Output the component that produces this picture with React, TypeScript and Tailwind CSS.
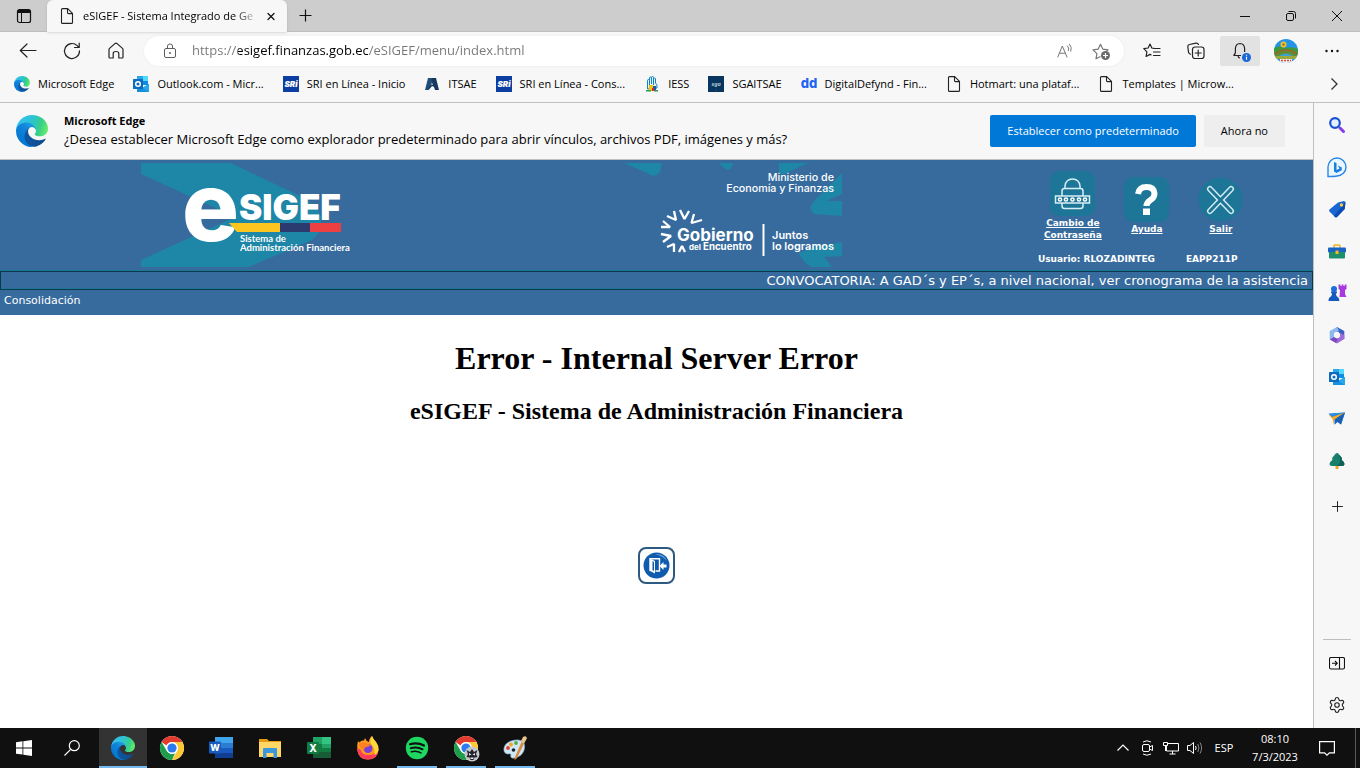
import React, { useId, useState } from 'react';
import { Plus, Search, Settings, X } from 'lucide-react';

interface IconProps {
  className?: string;
}

/* ---------- Brand icons ---------- */

const EdgeLogo: React.FC<IconProps> = ({ className }) => {
  const id = useId();
  return (
    <svg className={className} viewBox="4.6 5 256 256" aria-hidden="true">
      <defs>
        <linearGradient id={`${id}a`} x1="63" y1="178" x2="241" y2="178" gradientUnits="userSpaceOnUse">
          <stop offset="0" stopColor="#0c59a4" />
          <stop offset="1" stopColor="#114a8b" />
        </linearGradient>
        <linearGradient id={`${id}b`} x1="157" y1="100" x2="46" y2="221" gradientUnits="userSpaceOnUse">
          <stop offset="0" stopColor="#1b9de2" />
          <stop offset="0.4" stopColor="#1383d9" />
          <stop offset="1" stopColor="#0078d4" />
        </linearGradient>
        <linearGradient id={`${id}c`} x1="20" y1="60" x2="250" y2="130" gradientUnits="userSpaceOnUse">
          <stop offset="0" stopColor="#35c1f1" />
          <stop offset="0.45" stopColor="#2cc3d0" />
          <stop offset="0.75" stopColor="#36cf8a" />
          <stop offset="1" stopColor="#66eb6e" />
        </linearGradient>
      </defs>
      <path fill={`url(#${id}a)`} d="M235.68 195.46a93.73 93.73 0 0 1-10.54 4.71 101.87 101.87 0 0 1-35.9 6.46c-47.32 0-88.54-32.55-88.54-74.32A31.48 31.48 0 0 1 117.13 105c-42.8 1.8-53.8 46.4-53.8 72.53 0 73.88 68.09 81.37 82.76 81.37 7.91 0 19.84-2.3 27-4.56l1.31-.44a128.34 128.34 0 0 0 66.6-52.8 4 4 0 0 0-5.32-5.64z" />
      <path fill={`url(#${id}b)`} d="M110.34 246.34A79.2 79.2 0 0 1 87.6 225a80.72 80.72 0 0 1 29.53-120c3.12-1.47 8.45-4.13 15.54-4a32.35 32.35 0 0 1 25.69 13 31.88 31.88 0 0 1 6.36 18.66c0-.21 24.46-79.6-80-79.6-43.9 0-80 41.66-80 78.21a130.15 130.15 0 0 0 12.11 56 128 128 0 0 0 156.38 67.11 75.55 75.55 0 0 1-62.78-8z" />
      <path fill={`url(#${id}c)`} d="M156.94 153.78c-.81 1.05-3.3 2.5-3.3 5.66 0 2.61 1.7 5.12 4.72 7.23 14.38 10 41.49 8.68 41.56 8.68a59.56 59.56 0 0 0 30.27-8.35A61.38 61.38 0 0 0 260.44 114c.26-22.41-8-37.31-11.34-43.91C227.93 28.72 182.28 5 132.64 5a128 128 0 0 0-128 126.2c.48-36.54 36.8-66.05 80-66.05 3.5 0 23.46.34 42 10.07 16.34 8.58 24.9 18.94 30.85 29.21 6.18 10.67 7.28 24.15 7.28 29.52s-2.74 13.33-7.83 19.83z" />
    </svg>
  );
};

const OutlookIcon: React.FC<IconProps> = ({ className }) => (
  <svg className={className} viewBox="0 0 16 16" aria-hidden="true">
    <path fill="#28a8ea" d="M4 0h6v5H4z" />
    <path fill="#50d9ff" d="M10 0h5v5h-5z" />
    <path fill="#0364b8" d="M4 5h6v4H4z" />
    <path fill="#0f8be0" d="M10 5h5v4h-5z" />
    <path fill="#1490df" d="M4 9l6 2.5L16 8v8H4z" />
    <path fill="#28a8ea" d="M16 8v8l-7-4z" />
    <rect y="3" width="10" height="10" rx="0.6" fill="#0f6cbd" />
    <circle cx="5" cy="8" r="2.3" fill="none" stroke="#fff" strokeWidth="1.5" />
  </svg>
);

const SriIcon: React.FC<IconProps> = ({ className }) => (
  <svg className={className} viewBox="0 0 16 16" aria-hidden="true">
    <rect width="16" height="16" fill="#0b3ea0" />
    <text x="8" y="11" textAnchor="middle" fontFamily="Inter, sans-serif" fontWeight="900" fontStyle="italic" fontSize="8" fill="#fff">SRi</text>
  </svg>
);

const ItsaeIcon: React.FC<IconProps> = ({ className }) => (
  <svg className={className} viewBox="0 0 16 16" aria-hidden="true">
    <path fill="#1f4e79" d="M4 2h5L5 14H1z" />
    <path fill="#17375e" d="M8 2h4l3 12h-4l-1-3-2-1-2 2.500L4 13l3-5z" />
    <path fill="#8fb3d0" d="M8 6l1 3H7z" />
  </svg>
);

const IessIcon: React.FC<IconProps> = ({ className }) => (
  <svg className={className} viewBox="0 0 16 16" aria-hidden="true">
    <path fill="#e8f4fb" stroke="#1183c4" d="M3.500 13V4.500q0-1 1-1t1 1V2q0-1 1-1t1 1v-.500q0-1 1-1t1 1V3q0-1 1-1t1 1v4q2 1 1.500 5z" />
    <path stroke="#1183c4" d="M5.500 4v5M7.500 2v6M9.500 3v6" />
    <path fill="#f4c400" d="M5 9h4v6H5z" />
    <path fill="#1a5fb4" d="M9 10h3v4H9z" />
    <path fill="#e0252b" d="M8 12h2v3H8z" />
    <path fill="#2aa04a" d="M2 14h5v1.500H2zM10 14h4v1.500h-4z" />
  </svg>
);

const SgaIcon: React.FC<IconProps> = ({ className }) => (
  <svg className={className} viewBox="0 0 16 16" aria-hidden="true">
    <rect width="16" height="16" fill="#08365f" />
    <text x="8" y="9.500" textAnchor="middle" fontFamily="Inter, sans-serif" fontStyle="italic" fontWeight="700" fontSize="5" fill="#b9cad9">sga</text>
    <circle cx="8" cy="14" r="0.500" fill="#4b78a0" />
  </svg>
);

const DdIcon: React.FC<IconProps> = ({ className }) => (
  <svg className={className} viewBox="0 0 16 16" aria-hidden="true">
    <text x="8" y="12" textAnchor="middle" fontFamily="Inter, sans-serif" fontWeight="800" fontSize="13" fill="#1f63f2">dd</text>
  </svg>
);

const PageIcon: React.FC<IconProps> = ({ className }) => (
  <svg className={className} viewBox="0 0 16 16" fill="none" stroke="#222" strokeWidth="1.100" strokeLinejoin="round" aria-hidden="true">
    <path d="M3.500.600h5.200l4.800 4.800v9q0 1-1 1h-9q-1 0-1-1v-12.800q0-1 1-1z" />
    <path d="M8.500.600v4q0 1 1 1h4" />
  </svg>
);

/* ---------- Browser chrome ---------- */

const bookmarks = [
  { label: 'Microsoft Edge', icon: EdgeLogo },
  { label: 'Outlook.com - Micr...', icon: OutlookIcon },
  { label: 'SRI en Línea - Inicio', icon: SriIcon },
  { label: 'ITSAE', icon: ItsaeIcon },
  { label: 'SRI en Línea - Cons...', icon: SriIcon },
  { label: 'IESS', icon: IessIcon },
  { label: 'SGAITSAE', icon: SgaIcon },
  { label: 'DigitalDefynd - Fin...', icon: DdIcon },
  { label: 'Hotmart: una plataf...', icon: PageIcon },
  { label: 'Templates | Microw...', icon: PageIcon },
];

const TabStrip = () => (
  <header className="flex h-8 shrink-0 items-stretch border-b border-[#bdbdbd] bg-[#cdcdcd]">
    <button aria-label="Menú de acciones de pestaña" className="flex w-[47px] items-center justify-center">
      <svg className="size-4" viewBox="0 0 16 16" fill="none" stroke="#111" aria-hidden="true">
        <rect x="1.500" y="1.500" width="13" height="13" rx="2" strokeWidth="1.200" />
        <path d="M2 3.500h12" strokeWidth="3" />
        <path d="M5.500 4v10" />
      </svg>
    </button>
    <div className="-mb-px flex w-60 items-center rounded-t-md bg-[#f7f7f7] pl-3 pr-[10px] shadow-sm">
      <PageIcon className="size-4 shrink-0" />
      <span className="ml-2 flex-1 overflow-hidden whitespace-nowrap bg-linear-to-r from-black from-85% to-[#f0f0f0] bg-clip-text text-[11px] text-transparent">
        eSIGEF - Sistema Integrado de Ge
      </span>
      <button aria-label="Cerrar pestaña" className="ml-2 flex size-3 items-center justify-center">
        <X size={13} strokeWidth={2.5} color="#111" />
      </button>
    </div>
    <button aria-label="Nueva pestaña" className="flex w-9 items-center justify-center">
      <Plus size={19} strokeWidth={1.5} color="#111" />
    </button>
    <div className="ml-auto flex">
      <button aria-label="Minimizar" className="flex w-[46px] items-center justify-center">
        <svg className="size-3" viewBox="0 0 12 12" stroke="#111" aria-hidden="true"><path d="M1 6.500h10" /></svg>
      </button>
      <button aria-label="Restaurar" className="flex w-[46px] items-center justify-center">
        <svg className="size-3" viewBox="0 0 12 12" fill="none" stroke="#111" aria-hidden="true">
          <rect x="1.500" y="3.500" width="7" height="7" rx="1.500" />
          <path d="M3.500 1.500h5q2 0 2 2v5" />
        </svg>
      </button>
      <button aria-label="Cerrar" className="flex w-[46px] items-center justify-center">
        <svg className="size-3" viewBox="0 0 12 12" stroke="#111" aria-hidden="true"><path d="M1 1l10 10M11 1L1 11" /></svg>
      </button>
    </div>
  </header>
);

const Toolbar = () => {
  const [url, setUrl] = useState('https://esigef.finanzas.gob.ec/eSIGEF/menu/index.html');

  return (
    <div className="flex h-[38px] shrink-0 items-center px-2">
      <div className="flex gap-1">
        <button aria-label="Atrás" className="flex h-[30px] w-10 items-center justify-center">
          <svg className="size-5" viewBox="0 0 20 20" fill="none" stroke="#222" strokeWidth="1.200" strokeLinecap="round" strokeLinejoin="round" aria-hidden="true">
            <path d="M2.500 9.500h15.500M9 3L2.300 9.500 9 16" />
          </svg>
        </button>
        <button aria-label="Actualizar" className="flex h-[30px] w-10 items-center justify-center">
          <svg className="size-5" viewBox="0 0 20 20" fill="none" stroke="#222" strokeWidth="1.200" strokeLinecap="round" strokeLinejoin="round" aria-hidden="true">
            <path d="M17.500 9.800A7.500 7.500 0 1 1 15.200 4.600l1.800 1.800M17.200 2v4.500h-4.700" />
          </svg>
        </button>
        <button aria-label="Inicio" className="flex h-[30px] w-10 items-center justify-center">
          <svg className="size-5" viewBox="0 0 20 20" fill="none" stroke="#222" strokeWidth="1.200" strokeLinejoin="round" aria-hidden="true">
            <path d="M3 8.500q0-.6.500-1.100l5.700-5q.8-.6 1.600 0l5.700 5q.5.500.5 1.100v7.700q0 .8-.8.800h-3.400V12.500q0-2-2.800-2t-2.800 2V17H3.800q-.8 0-.8-.8z" />
          </svg>
        </button>
      </div>

      <div className="mx-2 flex h-[30px] flex-1 items-center rounded-full bg-white pl-4 pr-[5px] shadow-[0_0_3px_rgba(0,0,0,0.06)]">
        <button aria-label="Ver información del sitio" className="flex w-5 justify-center">
          <svg className="size-4" viewBox="0 0 16 16" fill="none" stroke="#5f5f5f" aria-hidden="true">
            <rect x="2.500" y="5.500" width="11" height="9" rx="1.500" />
            <path d="M5.500 5.500V3q0-2 2.500-2t2.500 2v2.500" />
            <circle cx="8" cy="10" r="0.600" fill="#5f5f5f" />
          </svg>
        </button>
        <input
          aria-label="Barra de direcciones y búsqueda"
          value={url}
          onChange={(e) => setUrl(e.target.value)}
          className="ml-3 min-w-0 flex-1 bg-[linear-gradient(90deg,#767676_46px,#000_46px,#000_176px,#767676_176px)] bg-clip-text text-[13px] text-transparent caret-black outline-none"
        />
        <button aria-label="Leer en voz alta" className="flex h-[30px] w-9 items-center justify-center">
          <svg className="size-4" viewBox="0 0 16 16" fill="none" stroke="#767676" strokeLinecap="round" aria-hidden="true">
            <path d="M.8 14L5.300 3 10 14M2.500 10.200h5.800" />
            <path d="M10.500 3q2 2 1 4.500M12.500 1.200q3 3 1.300 7" />
          </svg>
        </button>
        <button aria-label="Agregar esta página a favoritos" className="flex h-[30px] w-9 items-center justify-center">
          <svg className="size-5" viewBox="0 0 20 20" fill="none" stroke="#767676" strokeWidth="1.200" strokeLinejoin="round" aria-hidden="true">
            <path d="M9.500 15.500l-4.500 2.300.9-5.200L2 8.900l5.200-.8L9.500 3.300l2.300 4.800 5.200.8-2 2" />
            <circle cx="14.500" cy="14.500" r="4.500" fill="#6b6b6b" stroke="none" />
            <path d="M14.500 12v5M12 14.500h5" stroke="#fff" />
          </svg>
        </button>
      </div>

      <div className="flex gap-1">
        <button aria-label="Favoritos" className="flex h-[30px] w-10 items-center justify-center">
          <svg className="size-5" viewBox="0 0 20 20" fill="none" stroke="#222" strokeWidth="1.200" strokeLinejoin="round" strokeLinecap="round" aria-hidden="true">
            <path d="M12 7.300l-2.200-.3L8 3 6.100 7l-4.300.7 3.100 3.100-.8 4.700L8 13.400l1 .5M13 7.500h5M11.500 11h6.500M11.500 14.500h6.500" />
          </svg>
        </button>
        <button aria-label="Colecciones" className="flex h-[30px] w-10 items-center justify-center">
          <svg className="size-5" viewBox="0 0 20 20" fill="none" stroke="#222" strokeWidth="1.200" strokeLinecap="round" aria-hidden="true">
            <path d="M4.500 13.200q-1.800-.6-2-2L1.800 5.500Q1.800 3.800 3.500 3.500L10 2.200q1.800-.2 2.500 1.300" />
            <rect x="6.500" y="6" width="11.500" height="11.500" rx="2.500" />
            <path d="M12.200 9v6M9.200 12h6" />
          </svg>
        </button>
        <button aria-label="Notificaciones" className="flex h-[30px] w-10 items-center justify-center rounded-xs bg-[#e2e2e2]">
          <svg className="size-5 overflow-visible" viewBox="0 0 20 20" fill="none" stroke="#222" strokeWidth="1.200" strokeLinejoin="round" aria-hidden="true">
            <path d="M4.500 13.500q.9-1 .9-2.600V7.500Q5.600 2.600 10 2.500q4.400.1 4.600 5v3.400M3.500 14.500l1.500-2M3.500 14.500H11M8 15q.3 2 2 2" />
            <circle cx="16.500" cy="16.500" r="4.500" fill="#1a66d8" stroke="none" />
            <path d="M16.500 15.700v3M16.500 13.700v1" stroke="#fff" />
          </svg>
        </button>
        <button aria-label="Perfil" className="flex h-[30px] w-11 items-center justify-center">
          <svg className="size-6 rounded-full" viewBox="0 0 24 24" aria-hidden="true">
            <rect width="24" height="24" fill="#2593e6" />
            <path fill="#3d9a3b" d="M0 9q5-3 11 0 6-2 13 1v6H0z" />
            <circle cx="9.500" cy="5.500" r="3" fill="#f0c42c" />
            <circle cx="9.500" cy="5.500" r="1.200" fill="#8a7a30" />
            <path fill="#5d8f34" d="M0 14q12-6 24 0v5H0z" />
            <path fill="none" stroke="#a0622d" strokeWidth="1.500" d="M1 15q11-8 22 0" />
            <path fill="#3fa2d8" d="M5 17q7-5 14 0v1H5z" />
            <path fill="#9aa83c" d="M0 17h24v3H0z" />
            <path fill="#f3f3f3" d="M6 20h12v4H6z" />
            <path stroke="#d8442d" strokeWidth="1.500" strokeDasharray="2 1" d="M7 21.500h10" />
          </svg>
        </button>
        <button aria-label="Configuración y más" className="flex h-[30px] w-10 items-center justify-center">
          <svg className="size-4" viewBox="0 0 16 16" fill="#111" aria-hidden="true">
            <circle cx="2.500" cy="8" r="1.200" /><circle cx="8" cy="8" r="1.200" /><circle cx="13.500" cy="8" r="1.200" />
          </svg>
        </button>
      </div>
    </div>
  );
};

const BookmarksBar = () => (
  <nav aria-label="Favoritos" className="flex h-[33px] shrink-0 items-center gap-[19px] border-b border-[#c0c0c0] pb-1 pl-[14px] pr-5">
    {bookmarks.map(({ label, icon: Icon }) => (
      <a key={label} href="#" className="flex items-center gap-2 whitespace-nowrap text-[11px] leading-4">
        <Icon className="size-4" />
        {label}
      </a>
    ))}
    <button aria-label="Más favoritos" className="ml-auto">
      <svg className="h-3 w-3" viewBox="0 0 12 12" fill="none" stroke="#333" strokeWidth="1.300" aria-hidden="true"><path d="M3.500.500L9 6l-5.500 5.500" /></svg>
    </button>
  </nav>
);

const DefaultBrowserPrompt = () => (
  <section className="flex h-[57px] shrink-0 items-center border-b border-[#c0c0c0] bg-[#f7f7f7] pl-4 pr-7">
    <EdgeLogo className="size-8 shrink-0" />
    <div className="ml-4 flex-1 whitespace-nowrap pb-[2px] leading-[19px]">
      <p className="text-[11px] font-bold leading-[19px]">Microsoft Edge</p>
      <p className="text-[13px] leading-[19px]">
        ¿Desea establecer Microsoft Edge como explorador predeterminado para abrir vínculos, archivos PDF, imágenes y más?
      </p>
    </div>
    <button className="h-8 rounded-xs bg-[#0078d7] px-[17px] text-[11px] text-white">Establecer como predeterminado</button>
    <button className="ml-2 h-8 rounded-xs bg-[#eeeeee] px-[17px] text-[11px]">Ahora no</button>
  </section>
);

/* ---------- Sidebar ---------- */

const sidebarApps = [
  {
    label: 'Buscar',
    icon: (
      <>
        <path stroke="#8a3be8" strokeWidth="3" strokeLinecap="round" d="M11 11l3.500 3.500" />
        <circle cx="6" cy="6" r="4.800" fill="#e4f0ff" stroke="#1750d4" strokeWidth="2.200" />
      </>
    ),
  },
  {
    label: 'Bing',
    icon: (
      <>
        <path fill="#eaf7ff" stroke="#2a86e8" strokeWidth="1.400" d="M-1 17.500V8A9 9 0 1 1 8 17q-2 .500-9 .500z" />
        <path fill="#1b7fe0" d="M5 3l2.500 1v7l3-1.500L8.800 6.500l4 2v2.700L7.500 14 5 12.500z" />
      </>
    ),
  },
  {
    label: 'Compras',
    icon: (
      <>
        <path fill="#1767d2" d="M9 1.500L15 0l1.500 1-.8 7L8 16q-1 .8-2 0L.500 10.500q-.8-1 0-2z" />
        <path fill="#0b4bb3" d="M16.500 1l-.8 7L8 16q-1 .8-2 0l-1-1z" />
        <circle cx="12.500" cy="4" r="1.700" fill="#ffc83d" />
      </>
    ),
  },
  {
    label: 'Herramientas',
    icon: (
      <>
        <path fill="none" stroke="#f2b01e" strokeWidth="1.500" d="M5 5V3q0-1 1-1h4q1 0 1 1v2" />
        <rect x="-1" y="4.500" width="18" height="5" rx="1" fill="#1a62c4" />
        <path fill="#1c8f6d" d="M0 9h16v5.500q0 1-1 1H1q-1 0-1-1z" />
        <path fill="#f6b91c" d="M6.500 7.500h3v3.500h-3z" />
      </>
    ),
  },
  {
    label: 'Juegos',
    icon: (
      <>
        <path fill="#a83be0" d="M9.500-.500h2v1.500h1.200V-.500h1.800v1.500h1.200V-.500h1.800V4l-1.500 1v4l1.500 3h-7l.5-7-1.500-1z" />
        <circle cx="5" cy="4" r="3" fill="#1a6ddc" />
        <path fill="#1559c0" d="M2 6.500h6v1.800H6.800q0 3 2.700 4.500.8 1 .8 3.200H-.500q0-2.500.8-3.200Q3.200 11 3.200 8.300H2z" />
      </>
    ),
  },
  {
    label: 'Microsoft 365',
    icon: (
      <>
        <path fill="#3c5fc4" d="M8 0l7.300 4v8L10 8V5L5.500 4z" />
        <path fill="#a06ad8" d="M15.300 12L8 16.500l-4-2.500 6-3.500L11 6l4.300 2z" />
        <path fill="#8cb9ee" d="M8 0L.7 4v8.500L5 11V6l5-2.500z" />
        <path fill="#7a4bc0" d="M.7 12.500L5 10l4 1.500-2 4.500z" />
        <path fill="#f7f7f7" d="M8 5l3 1.600v3.200L8 11.500 5 9.800V6.600z" />
      </>
    ),
  },
  { label: 'Outlook', icon: <OutlookIcon className="size-4" /> },
  {
    label: 'Drop',
    icon: (
      <>
        <path fill="#2b8ce6" d="M0 3l16-1.500-4 12L8 10z" />
        <path fill="#f7a823" d="M0 4l16-2.500L5 9v5L3.500 8z" />
        <path fill="#2b8ce6" d="M-.500 2.500L16 1.500 3 6z" />
        <path fill="#1660b8" d="M16 1.500L5.500 8.500v5.300L8.500 11l3.500 2.500z" />
      </>
    ),
  },
  {
    label: 'E-tree',
    icon: (
      <>
        <path fill="#f2a628" d="M6.500 11.500h3V16h-3z" />
        <path fill="#16806a" d="M8 0q1.500 0 2 1.500l2.500 3q1 1.500 0 2.200 3 2.300 3 4.300 0 2-2.500 2H3Q.500 13 .500 11q0-2 3-4.300-1-.7 0-2.200L6 1.500Q6.500 0 8 0z" />
        <path fill="#0d6157" d="M10 1.500l2.500 3q1 1.500 0 2.200 3 2.300 3 4.300 0 2-2.500 2H8q5-3 2-11.500z" />
      </>
    ),
  },
];

const Sidebar = () => (
  <aside className="flex w-[47px] shrink-0 flex-col items-center border-l border-[#c0c0c0] bg-[#f7f7f7] pt-px">
    {sidebarApps.map(({ label, icon }) => (
      <button key={label} aria-label={label} className="flex h-[42px] w-full items-center justify-center">
        <svg className="size-4 overflow-visible" viewBox="0 0 16 16" aria-hidden="true">{icon}</svg>
      </button>
    ))}
    <button aria-label="Personalizar" className="mt-[3px] flex h-[42px] w-full items-center justify-center">
      <Plus size={17} strokeWidth={1.4} color="#222" />
    </button>
    <div className="mb-[2px] mt-auto flex w-full flex-col items-center">
      <div className="h-px w-7 bg-[#bdbdbd]" />
      <button aria-label="Ocultar barra lateral" className="mt-[2px] flex h-[42px] w-full items-center justify-center">
        <svg className="size-4" viewBox="0 0 16 16" fill="none" stroke="#111" strokeWidth="1.100" aria-hidden="true">
          <rect x=".500" y="2.500" width="15" height="11.500" rx="1.500" />
          <path d="M10.500 2.500V14M3 8.200h5M6 6l2.200 2.200L6 10.500" />
        </svg>
      </button>
      <button aria-label="Configuración" className="flex h-[42px] w-full items-center justify-center">
        <Settings size={18} strokeWidth={1.500} color="#222" />
      </button>
    </div>
  </aside>
);

/* ---------- eSIGEF page ---------- */

const SigefLogo = () => (
  <svg className="h-[104px] w-[211px] overflow-visible" viewBox="0 0 211 104" role="img" aria-label="eSIGEF">
    <path fill="#1e86a6" d="M0 0H90L161 34Q176 42 180 53 181 70 171 77L108 104H0V97L94 54 0 11z" />
    <text x="41" y="78" fontFamily="Inter, sans-serif" fontWeight="800" fontSize="95" fill="#fff">e</text>
    <text x="98" y="57" fontFamily="Inter, sans-serif" fontWeight="900" fontSize="35" fill="#fff">SIGEF</text>
    <path fill="#fcc51f" d="M88 60h51v9H96z" />
    <path fill="#2b3a6f" d="M139 60h30v9h-30z" />
    <path fill="#ee3f43" d="M169 60h31v9h-31z" />
    <text x="99" y="79" fontFamily="Lato, sans-serif" fontWeight="700" fontSize="9.5" fill="#fff">
      Sistema de
      <tspan x="99" y="88">Administración Financiera</tspan>
    </text>
  </svg>
);

const MinistryLogo = () => (
  <svg className="h-[104px] w-[218px] overflow-visible" viewBox="0 0 218 104" role="img" aria-label="Ministerio de Economía y Finanzas">
    <g fill="#1e86a6">
      <path d="M0 0L23 10Q28 14 33 12 38 9 37.500 0z" />
      <path d="M95 0L100 5Q103 8 106 6 109 3 109 0z" />
      <path d="M155 0H184L160 11Q156 13 155 9z" />
      <path d="M218 10L190 38Q183 45 190 51L218 53V38H202L218 31z" />
      <path d="M218 79L190 84 175 90Q177 97 187 104H208L200 94 218 93z" />
    </g>
    <text x="210" y="18" fontFamily="Inter, sans-serif" fontWeight="500" fontSize="10.7" fill="#fff" textAnchor="end">
      Ministerio de
      <tspan x="210" y="29">Economía y Finanzas</tspan>
    </text>
    <g fill="none" stroke="#fff" strokeWidth="2.300" strokeLinejoin="bevel">
      <path d="M56 47l4.500 9L65 48" />
      <path d="M43 53l9 4-2-9" />
      <path d="M70 51l-2.500 9L78 57" />
      <path d="M37 64h9l-7-6" />
      <path d="M37 71l10 2-8 6" />
      <path d="M43 84l7-3v8" />
      <path d="M55 89l3-6 3 6" />
    </g>
    <g fontFamily="Inter, sans-serif" fontWeight="700" fill="#fff">
      <text x="53" y="78" fontSize="17">
        Gobierno
        <tspan x="65" y="87" fontSize="8">del</tspan>
        <tspan x="79" y="87" fontSize="9.700">Encuentro</tspan>
      </text>
      <text x="148" y="76" fontSize="11" fontWeight="600">
        Juntos
        <tspan x="148" y="87">lo logramos</tspan>
      </text>
    </g>
    <path fill="#fff" d="M138.500 61h2v32h-2z" />
  </svg>
);

const AppHeader = () => (
  <div className="bg-[#376b9e] font-['DejaVu_Sans',sans-serif] text-white">
    <div className="grid h-[111px] grid-cols-[3fr_3fr_2fr] pt-[3px]">
      <div className="flex justify-center"><SigefLogo /></div>
      <div className="flex justify-center pr-3"><MinistryLogo /></div>
      <div className="flex justify-center">
        <div className="grid w-[222px] grid-cols-3 grid-rows-[88px_auto] text-center text-[9px] font-bold leading-3">
          <a href="#" className="flex flex-col items-center pr-1 pt-2 underline">
            <svg className="size-[45px]" viewBox="0 0 45 45" fill="none" stroke="#d7eef2" strokeWidth="1.500" aria-hidden="true">
              <rect width="45" height="45" rx="9" fill="#1d7698" stroke="none" />
              <path d="M15 18v-3q1-7 7.500-7t7.500 7v3" />
              <path d="M12 25v-5q0-2.500 2.500-2.500h16q2.500 0 2.500 2.500v5M12 32v3q0 2.500 2.500 2.500h16q2.500 0 2.500-2.500v-3" />
              <rect x="5.500" y="25" width="34" height="7" />
              <g stroke="#fff">
                <circle cx="10" cy="28.500" r="1.600" /><circle cx="16" cy="28.500" r="1.600" /><circle cx="22.500" cy="28.500" r="1.600" />
                <circle cx="29" cy="28.500" r="1.600" /><circle cx="35" cy="28.500" r="1.600" />
              </g>
            </svg>
            <span className="mt-px">Cambio de Contraseña</span>
          </a>
          <a href="#" className="flex flex-col items-center pr-1 pt-[14px] underline">
            <svg className="size-[45px]" viewBox="0 0 45 45" aria-hidden="true">
              <rect width="45" height="45" rx="9" fill="#1d7698" />
              <path fill="none" stroke="#fff" strokeWidth="6" d="M14 17q1-7 8.500-7t8 6.500q0 4-4 6.500-4 2.500-4 6" />
              <path fill="#fff" d="M19 31.500h7V38h-7z" />
            </svg>
            <span className="mt-px">Ayuda</span>
          </a>
          <a href="#" className="flex flex-col items-center pr-1 pt-[14px] underline">
            <svg className="size-[45px]" viewBox="0 0 45 45" fill="none" strokeLinecap="round" aria-hidden="true">
              <circle cx="22.500" cy="22.500" r="22" fill="#1d7698" />
              <path stroke="#d7eef2" strokeWidth="6" d="M12 12l21 22M33 12L12 34" />
              <path stroke="#1d7698" strokeWidth="3.200" d="M12 12l21 22M33 12L12 34" />
            </svg>
            <span className="mt-px">Salir</span>
          </a>
          <span className="col-span-2 whitespace-nowrap pt-[2px] text-left">Usuario: RLOZADINTEG</span>
          <span className="pt-[2px] text-left">EAPP211P</span>
        </div>
      </div>
    </div>
    <div className="flex h-[19px] items-center justify-end overflow-hidden whitespace-nowrap border border-[#0b3a4c] px-1 text-[13px] shadow-[0_-1px_0_#1d7698,inset_0_-1px_0_#1d7698]">
      CONVOCATORIA: A GAD´s y EP´s, a nivel nacional, ver cronograma de la asistencia
    </div>
    <nav className="flex h-[25px] items-start px-1 pt-[3px] text-[11px] leading-4">
      <a href="#">Consolidación</a>
    </nav>
  </div>
);

const ErrorContent = () => (
  <main className="flex flex-1 flex-col items-center bg-white pt-[25px] font-['Liberation_Serif',serif] font-bold text-black">
    <h1 className="text-[32px] leading-9">Error - Internal Server Error</h1>
    <h2 className="mt-[21px] text-2xl leading-7">eSIGEF - Sistema de Administración Financiera</h2>
    <button aria-label="Salir" className="mt-[122px] flex size-[37px] items-center justify-center rounded-lg border-2 border-[#2d5a80] bg-white">
      <svg className="size-[27px]" viewBox="0 0 27 27" aria-hidden="true">
        <circle cx="13.500" cy="13.500" r="13" fill="#0f5cae" />
        <path fill="#5fa0dd" d="M12 2q9-1 12 7-4-5-12-7z" />
        <path fill="none" stroke="#fff" strokeWidth="1.400" d="M7 19V6.800h9.500V19h-4" />
        <path fill="#fff" d="M7 6.500l5 2.500v12.500L7 19zM23.500 12.500v3H20.500v2.500l-4-4 4-4v2.500z" />
        <path fill="#0f5cae" d="M9.500 9l1.500 1v9l-1.500-1z" />
      </svg>
    </button>
  </main>
);

/* ---------- Windows taskbar ---------- */

const ChromeArt = () => (
  <>
    <circle cx="12" cy="12" r="12" fill="#fff" />
    <path fill="#e33b2e" d="M12 0a12 12 0 0 1 10.400 6H12a6 6 0 0 0-5.500 3.500L1.600 6A12 12 0 0 1 12 0z" />
    <path fill="#fcc934" d="M22.400 6A12 12 0 0 1 12 24l5.200-9A6 6 0 0 0 12 6z" />
    <path fill="#1e9e4a" d="M1.600 6l5.200 9A6 6 0 0 0 15 17.200L12 24A12 12 0 0 1 1.600 6z" />
    <circle cx="12" cy="12" r="5.800" fill="#fff" />
    <circle cx="12" cy="12" r="4.600" fill="#2b7bef" />
  </>
);

const taskbarApps = [
  { label: 'Google Chrome', open: false, icon: <ChromeArt /> },
  {
    label: 'Word',
    open: false,
    icon: (
      <>
        <path fill="#41a5ee" d="M6 1h18v6H6z" />
        <path fill="#2b7cd3" d="M6 7h18v5H6z" />
        <path fill="#185abd" d="M6 12h18v5H6z" />
        <path fill="#103f91" d="M6 17h18v5H6z" />
        <rect y="5.500" width="12" height="12" rx="1" fill="#185abd" />
        <text x="6" y="15" textAnchor="middle" fontFamily="Inter, sans-serif" fontWeight="800" fontSize="9" fill="#fff">W</text>
      </>
    ),
  },
  {
    label: 'Explorador de archivos',
    open: false,
    icon: (
      <>
        <path fill="#e59c13" d="M1 3h8l2 2h12v6H1z" />
        <path fill="#ffd767" d="M1 6h22v15H1z" />
        <path fill="#3a96dd" d="M5 13q0-1 1-1h12q1 0 1 1v9h-3.500v-5h-7v5H5z" />
      </>
    ),
  },
  {
    label: 'Excel',
    open: false,
    icon: (
      <>
        <path fill="#21a366" d="M6 1h9v7H6z" />
        <path fill="#33c481" d="M15 1h9v7h-9z" />
        <path fill="#107c41" d="M6 8h9v8H6z" />
        <path fill="#21a366" d="M15 8h9v5h-9z" />
        <path fill="#107c41" d="M15 12h9v5h-9z" />
        <path fill="#185c37" d="M6 16h18v6H6z" />
        <rect y="6" width="12" height="12" rx="1" fill="#107c41" />
        <text x="6" y="15.500" textAnchor="middle" fontFamily="Inter, sans-serif" fontWeight="800" fontSize="10" fill="#fff">X</text>
      </>
    ),
  },
  {
    label: 'Firefox',
    open: false,
    icon: (
      <>
        <path fill="#ff9a1f" d="M2 5l1.500 1.500Q5 4 8 4.500L9 2q1 3 4 4 0-4 3-6 1 3 4 6 3 4 2.500 8-1 9.500-10.500 9.500T1.300 14Q.8 9 2 5z" />
        <path fill="#ff3d5a" d="M1.300 12Q2 23.500 12 23.500T22.500 13q-3 6-10 6T5 14z" />
        <path fill="#ffd93b" d="M16 0q1 3 4 6 3 4 2.500 8-1 4-4 5 1-6-2-9-4-3-.5-10z" />
        <circle cx="12" cy="12.500" r="4.500" fill="#7b3fd6" />
        <path fill="#ff8020" d="M3 8q4-3 9 0l3 1q-3 2-5 2-2 1-2 3-4-1-5-6z" />
      </>
    ),
  },
  {
    label: 'Spotify',
    open: true,
    icon: (
      <>
        <circle cx="12" cy="12" r="11.200" fill="#1ed760" />
        <g fill="none" stroke="#101010" strokeLinecap="round">
          <path strokeWidth="2.200" d="M5 8.200q7.500-2.200 14 1.300" />
          <path strokeWidth="1.900" d="M5.800 12.200q6.200-1.800 11.800 1.100" />
          <path strokeWidth="1.500" d="M6.300 15.800q5.200-1.500 9.700 1.100" />
        </g>
      </>
    ),
  },
  {
    label: 'Google Chrome - perfil',
    open: true,
    icon: (
      <>
        <ChromeArt />
        <circle cx="18" cy="18" r="7.500" fill="#c3c6cd" />
        <path fill="#22242a" d="M12.500 14l3.500 2 2-3 2 3 3.500-2-1.500 4 1.500 3-3 .500-1 2.500h-3l-1-2.500-3-.500 1.500-3z" />
        <path fill="#e6e7ea" d="M15 17l2.500 1.500-2.500 1zM21 17l-2.500 1.500 2.500 1zM16.500 21.500h3V23h-3z" />
      </>
    ),
  },
  {
    label: 'Paint',
    open: true,
    icon: (
      <>
        <path fill="#cfe6f5" stroke="#8fb9d6" strokeWidth=".6" d="M1 15Q0 8 8 5q9-3 13 2 2 7-3 12-5 4-9 3-2-1-1-3 0-2-3-1-3 0-4-3z" />
        <circle cx="5" cy="12" r="1.900" fill="#e0432f" />
        <circle cx="8" cy="8.500" r="1.900" fill="#f2a324" />
        <circle cx="13" cy="7" r="1.900" fill="#52b043" />
        <circle cx="10.500" cy="14" r="1.800" fill="#16202a" />
        <path fill="#d98a3a" d="M18.500 6l2.500 1.500L14.500 21q-1.500 3-3 3 0-2 1-4z" />
        <path fill="#e9c58e" d="M18 5l2-4q2-1.500 3.500 0 1 1.500-.5 3l-2 3.500z" />
      </>
    ),
  },
];

const Taskbar = () => (
  <footer className="flex h-10 shrink-0 bg-[#101010] text-white">
    <button aria-label="Inicio" className="flex w-12 items-center justify-center">
      <svg className="size-4" viewBox="0 0 16 16" fill="#fff" aria-hidden="true">
        <path d="M0 2.200L6.500 1.300V7.500H0zM7.300 1.200L16 0v7.500H7.300zM0 8.400h6.500v6.200L0 13.700zM7.300 8.400H16V16l-8.700-1.200z" />
      </svg>
    </button>
    <button aria-label="Buscar" className="flex w-12 items-center justify-center">
      <svg className="size-4" viewBox="0 0 16 16" fill="none" stroke="#fff" strokeWidth="1.200" aria-hidden="true">
        <circle cx="10.300" cy="5.700" r="5" />
        <path d="M6.700 9.300L.500 15.500" />
      </svg>
    </button>
    <div className="ml-[3px] flex gap-px">
      <button aria-label="Microsoft Edge" className="flex w-12 flex-col items-center justify-between border-b-2 border-[#76b9ed] bg-[#333333] pt-2">
        <EdgeLogo className="size-6" />
      </button>
      {taskbarApps.map(({ label, open, icon }) => (
        <button key={label} aria-label={label} className="flex w-12 flex-col items-center justify-between pt-2">
          <svg className="size-6 overflow-visible" viewBox="0 0 24 24" aria-hidden="true">{icon}</svg>
          {open && <span className="h-[2px] w-10 bg-[#76b9ed]" />}
        </button>
      ))}
    </div>

    <div className="ml-auto flex items-center text-[11px] leading-[18px]">
      <button aria-label="Mostrar iconos ocultos" className="flex w-6 justify-center">
        <svg className="size-3" viewBox="0 0 12 12" fill="none" stroke="#fff" strokeWidth="1.200" aria-hidden="true"><path d="M.500 8.500L6 3l5.500 5.500" /></svg>
      </button>
      <button aria-label="Reunirse ahora" className="flex w-6 justify-center">
        <svg className="size-4" viewBox="0 0 16 16" fill="none" stroke="#fff" aria-hidden="true">
          <rect x="3.500" y="4.500" width="7" height="7" rx="1.500" />
          <path d="M10.500 7l3-1.500v5l-3-1.500M4 2q4-2.500 8 0M4 14q4 2.500 8 0" />
        </svg>
      </button>
      <button aria-label="Red" className="flex w-6 justify-center">
        <svg className="size-4" viewBox="0 0 16 16" fill="none" stroke="#fff" aria-hidden="true">
          <path d="M5 3.500h10.500v7.500H3.500V6M9.500 11v3M6.500 14h6M.500 2.500h4v3h-4zM2.500 5.500V11" />
        </svg>
      </button>
      <button aria-label="Volumen" className="flex w-6 justify-center">
        <svg className="size-4" viewBox="0 0 16 16" fill="none" stroke="#fff" aria-hidden="true">
          <path d="M.500 5.500H3L6.500 2.500v11L3 10.500H.500z" />
          <path d="M8.500 6q1.200 2 0 4" />
          <path stroke="#888" d="M10.800 4q2.200 4 0 8M13 2.500q3.200 5.500 0 11" />
        </svg>
      </button>
      <button className="w-[34px] text-center">ESP</button>
      <button className="w-[68px] text-center">
        <time dateTime="2023-03-07T08:10">
          <span className="block">08:10</span>
          <span className="block">7/3/2023</span>
        </time>
      </button>
      <button aria-label="Notificaciones" className="flex w-9 justify-center">
        <svg className="size-4" viewBox="0 0 16 16" fill="none" stroke="#fff" strokeWidth="1.200" aria-hidden="true">
          <path d="M.600 1.600h14.800v11.300h-5L8 15.200l-2.400-2.300h-5z" />
        </svg>
      </button>
      <button aria-label="Mostrar escritorio" className="ml-[10px] h-10 w-[5px] border-l border-[#5a5a5a]" />
    </div>
  </footer>
);

const App = () => {
  return (
    <div className="flex min-h-screen flex-col bg-[#f7f7f7] font-['Open_Sans','Noto_Sans',sans-serif] text-black">
      <TabStrip />
      <Toolbar />
      <BookmarksBar />
      <div className="flex flex-1">
        <div className="flex min-w-0 flex-1 flex-col">
          <DefaultBrowserPrompt />
          <AppHeader />
          <ErrorContent />
        </div>
        <Sidebar />
      </div>
      <Taskbar />
    </div>
  );
};

export default App;
